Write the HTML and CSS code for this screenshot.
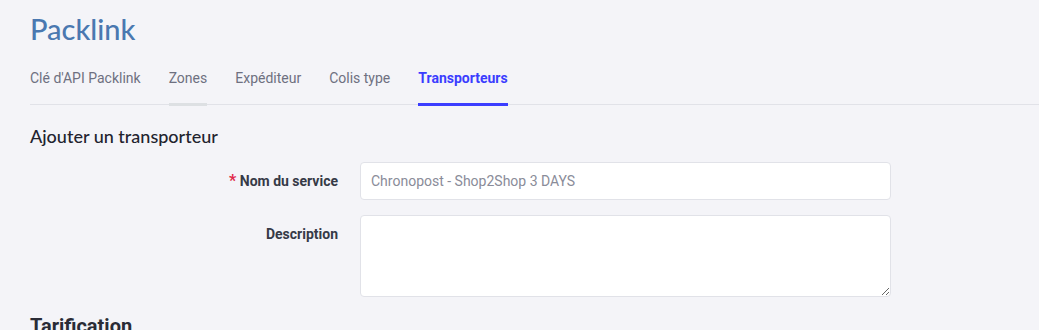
FILE: index.html
```html
<!DOCTYPE html>
<html lang="fr">
<head>
    <meta charset="UTF-8">
    <title>Packlink</title>
    <link rel="stylesheet" href="styles.css">
</head>
<body>
    <h1 class="brand">Packlink</h1>
    <nav class="tabs">
        <a class="tab">Clé d'API Packlink</a>
        <a class="tab hover">Zones</a>
        <a class="tab">Expéditeur</a>
        <a class="tab">Colis type</a>
        <a class="tab active">Transporteurs</a>
    </nav>
    <main>
        <h2 class="section">Ajouter un transporteur</h2>
        <form class="form">
            <label class="label" for="name"><span class="req">*</span> Nom du service</label>
            <input type="text" id="name" class="field" value="Chronopost - Shop2Shop 3 DAYS">
            <label class="label" for="desc">Description</label>
            <textarea id="desc" class="field area"></textarea>
        </form>
        <h2 class="subsection">Tarification</h2>
    </main>
</body>
</html>
```
FILE: styles.css
```css
body {
    margin: 0;
    padding: 0 0 0 30px;
    background-color: #f4f4f8;
    font-family: Roboto, "Liberation Sans", sans-serif;
    overflow: hidden;
}
.brand {
    margin: 0;
    padding-top: 12px;
    height: 46px;
    font-family: Lato, sans-serif;
    font-weight: 500;
    font-size: 29px;
    line-height: 34px;
    color: #4a78b0;
}
.tabs {
    display: flex;
    gap: 28px;
    border-bottom: 1px solid #e1e2e8;
    height: 47px;
    box-sizing: border-box;
}
.tab {
    position: relative;
    padding-top: 10px;
    font-size: 14px;
    line-height: 20px;
    color: #6e7080;
}
.tab.hover::after,
.tab.active::after {
    content: "";
    position: absolute;
    left: 0;
    right: 0;
    bottom: -2px;
    height: 3px;
    background-color: #dde0e3;
}
.tab.active {
    color: #3b3dff;
    font-weight: 700;
}
.tab.active::after {
    background-color: #3b3dff;
}
.section {
    margin: 19px 0 0;
    font-family: Lato, sans-serif;
    font-weight: 500;
    font-size: 18px;
    line-height: 24px;
    color: #22232e;
}
.form {
    display: grid;
    grid-template-columns: 308px 531px;
    column-gap: 22px;
    row-gap: 15px;
    margin-top: 14px;
}
.label {
    text-align: right;
    font-size: 14px;
    font-weight: 700;
    color: #363a47;
    line-height: 38px;
}
.req {
    color: #e0294a;
    font-size: 16px;
}
.field {
    box-sizing: border-box;
    height: 38px;
    border: 1px solid #e1e2e8;
    border-radius: 4px;
    background-color: white;
    padding: 0 10px;
    font-family: Roboto, sans-serif;
    font-size: 14px;
    color: #8a8c99;
}
.area {
    height: 82px;
    resize: vertical;
}
.subsection {
    margin: 17px 0 0;
    font-family: Roboto, sans-serif;
    font-weight: 700;
    font-size: 20px;
    line-height: 24px;
    color: #2a2c36;
}
```
